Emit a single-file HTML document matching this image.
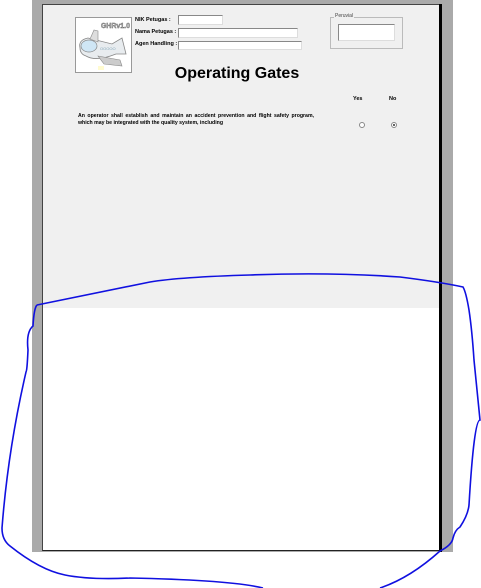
<!DOCTYPE html>
<html><head><meta charset="utf-8"><style>
html,body{margin:0;padding:0;width:481px;height:588px;background:#fff;overflow:hidden;font-family:"Liberation Sans",sans-serif;}
.abs{position:absolute}
.lbl{font-size:5.5px;font-weight:bold;color:#000}
.inp{background:#fff;border:1px solid #888;border-bottom-color:#ddd;border-right-color:#ddd;box-sizing:border-box}
</style></head><body>
<div class="abs" style="left:32px;top:0;width:421px;height:552px;background:#aaa"></div>
<div class="abs" style="left:42px;top:4px;width:398px;height:547px;background:#fff;border-left:1px solid #444;border-top:1px solid #444;border-bottom:1px solid #222;box-sizing:border-box"></div>
<div class="abs" style="left:439px;top:4px;width:3px;height:548px;background:#000"></div>
<div class="abs" style="left:43px;top:5px;width:396px;height:303px;background:#f0f0f0"></div>

<div class="abs" style="left:75px;top:17px;width:57px;height:56px;background:#fff;border:1px solid #999;box-sizing:border-box;overflow:hidden">
<svg width="57" height="56" viewBox="0 0 57 56">
<text x="54" y="10" text-anchor="end" font-family="Liberation Sans" font-size="7" font-weight="bold" fill="#bbb" stroke="#666" stroke-width="0.4">GHRv1.0</text>
<path d="M4 30 Q2 22 12 20 L36 26 L46 20 L48 28 L50 36 L40 36 Q20 44 10 38 Q4 36 4 30Z" fill="#e8ecef" stroke="#888" stroke-width="0.8"/>
<ellipse cx="13" cy="28" rx="8" ry="6" fill="#cfe6f5" stroke="#888" stroke-width="0.7"/>
<path d="M14 21 L18 12 L22 13 L22 24Z" fill="#ddd" stroke="#888" stroke-width="0.6"/>
<path d="M22 38 L44 42 L46 48 L28 46Z" fill="#ccc" stroke="#888" stroke-width="0.6"/>
<text x="24" y="32" font-size="4" fill="#8ab">OOOOO</text>
<rect x="22" y="48" width="6" height="4" fill="#fffbd0"/>
</svg></div>

<div class="abs lbl" style="left:135px;top:17px">NIK Petugas :</div>
<div class="abs lbl" style="left:135px;top:29px">Nama Petugas :</div>
<div class="abs lbl" style="left:135px;top:41px">Agen Handling :</div>
<div class="abs inp" style="left:178px;top:15px;width:45px;height:10px"></div>
<div class="abs inp" style="left:178px;top:28px;width:120px;height:10px"></div>
<div class="abs inp" style="left:178px;top:41px;width:124px;height:9px"></div>

<div class="abs" style="left:330px;top:17px;width:73px;height:32px;border:1px solid #bbb;box-sizing:border-box"></div>
<div class="abs" style="left:334px;top:13px;font-size:5px;color:#444;background:#f0f0f0;padding:0 1px">Peruvial</div>
<div class="abs inp" style="left:338px;top:24px;width:57px;height:17px"></div>

<div class="abs" style="left:140px;top:65px;width:194px;text-align:center;font-size:16px;font-weight:bold;color:#000">Operating Gates</div>

<div class="abs lbl" style="left:353px;top:96px">Yes</div>
<div class="abs lbl" style="left:389px;top:96px">No</div>
<div class="abs lbl" style="left:78px;top:113px;width:236px;text-align:justify;line-height:6.5px;font-size:5.2px">An operator shall establish and maintain an accident prevention and flight safety program, which may be integrated with the quality system, including</div>
<div class="abs" style="left:359px;top:122px;width:4px;height:4px;border-radius:50%;border:1px solid #888;background:#fff"></div>
<div class="abs" style="left:391px;top:122px;width:4px;height:4px;border-radius:50%;border:1px solid #888;background:#fff"><div style="margin:1px;width:2px;height:2px;background:#333;border-radius:50%"></div></div>

<svg class="abs" style="left:0;top:0" width="481" height="588">
<path d="M37 305 Q34 308 33 326 Q26 332 28 350 Q27 372 26 372 Q8 450 2 528 Q2 540 10 546 Q40 570 65 575 Q90 580 130 578 Q230 580 263 588 M380 588 Q410 578 440 551 Q452 545 453 538 Q455 530 460 527 Q468 515 469 505 Q474 420 480 420 Q476 380 474 360 Q472 330 469 310 Q466 292 463 287 Q440 282 400 277 Q330 272 250 275 Q180 277 150 282 Q80 296 37 305" fill="none" stroke="#1010e0" stroke-width="1.6"/>
</svg>
</body></html>
